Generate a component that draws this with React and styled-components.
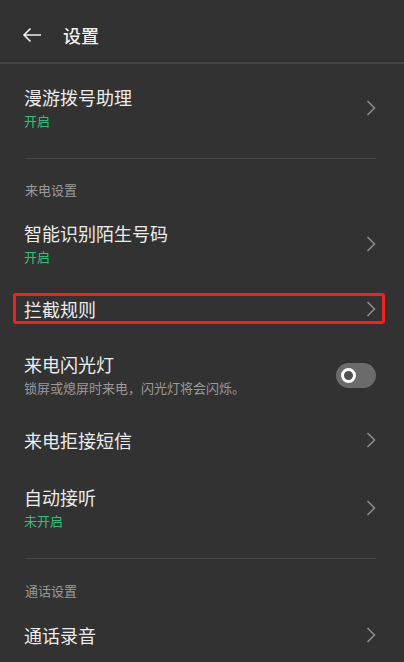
import styled, { createGlobalStyle } from "styled-components";

const GlobalStyle = createGlobalStyle`
    body {
        margin: 0;
        background: #323232;
        font-family: "Noto Sans CJK SC", "Noto Sans", sans-serif;
    }
`;

const Page = styled.div`
    width: 404px;
    min-height: 662px;
    background: #323232;
    color: #ececec;
    overflow: hidden;
`;

const Header = styled.div`
    display: flex;
    align-items: center;
    height: 64px;
    padding: 8px 0 0 22px;
    box-sizing: border-box;
    gap: 21px;
    border-bottom: 2px solid #454545;
    h1 {
        margin: 0;
        font-size: 18px;
        font-weight: 500;
        color: #f0f0f0;
        line-height: 24px;
    }
`;

const Row = styled.div`
    position: relative;
    display: flex;
    align-items: center;
    justify-content: space-between;
    height: ${props => props.h}px;
    padding: 0 28px 0 24px;
    box-sizing: border-box;

    ${props =>
        props.marked &&
        `
        &::after {
            content: "";
            position: absolute;
            left: 13px;
            right: 19px;
            top: 6px;
            bottom: 7px;
            border: 3px solid #f2211c;
            border-radius: 3px;
        }
    `}
`;

const Texts = styled.div`
    display: flex;
    flex-direction: column;
    gap: 2px;
`;

const Title = styled.div`
    font-size: 18px;
    line-height: 24px;
    color: #ececec;
`;

const Sub = styled.div`
    font-size: 13px;
    line-height: 20px;
    color: ${props => (props.green ? "#2ec07a" : "#9a9a9a")};
`;

const Divider = styled.div`
    margin: ${props => props.top}px 28px 0 25px;
    height: 1px;
    background: #474747;
`;

const Section = styled.div`
    padding: ${props => props.top}px 0 0 25px;
    font-size: 13px;
    line-height: 20px;
    color: #9a9a9a;
`;

const Toggle = styled.div`
    width: 40px;
    height: 25px;
    border-radius: 13px;
    background: #6b6b6b;
    display: flex;
    align-items: center;
    padding-left: 5px;
    box-sizing: border-box;
    &::before {
        content: "";
        width: 9px;
        height: 9px;
        border-radius: 50%;
        border: 3px solid #ffffff;
        background: #505050;
    }
`;

const Chevron = () => (
    <svg width="10" height="16" viewBox="0 0 10 16">
        <path d="M1.5 1 L8.5 8 L1.5 15" fill="none" stroke="#8a8a8a" strokeWidth="1.6" />
    </svg>
);

const BackArrow = () => (
    <svg width="20" height="16" viewBox="0 0 20 16">
        <path
            d="M19 8 H2 M8.5 1.5 L2 8 L8.5 14.5"
            fill="none"
            stroke="#f0f0f0"
            strokeWidth="1.6"
        />
    </svg>
);

export default function App() {
    return (
        <Page>
            <GlobalStyle />
            <Header>
                <BackArrow />
                <h1>设置</h1>
            </Header>

            <Row h={88}>
                <Texts>
                    <Title>漫游拨号助理</Title>
                    <Sub green>开启</Sub>
                </Texts>
                <Chevron />
            </Row>
            <Divider top={6} />
            <Section top={21}>来电设置</Section>

            <Row h={87}>
                <Texts>
                    <Title>智能识别陌生号码</Title>
                    <Sub green>开启</Sub>
                </Texts>
                <Chevron />
            </Row>
            <Row h={44} marked>
                <Title>拦截规则</Title>
                <Chevron />
            </Row>
            <Row h={88}>
                <Texts>
                    <Title>来电闪光灯</Title>
                    <Sub>锁屏或熄屏时来电，闪光灯将会闪烁。</Sub>
                </Texts>
                <Toggle />
            </Row>
            <Row h={42}>
                <Title>来电拒接短信</Title>
                <Chevron />
            </Row>
            <Row h={94}>
                <Texts>
                    <Title>自动接听</Title>
                    <Sub green>未开启</Sub>
                </Texts>
                <Chevron />
            </Row>
            <Divider top={3} />
            <Section top={22}>通话设置</Section>

            <Row h={68}>
                <Title>通话录音</Title>
                <Chevron />
            </Row>
        </Page>
    );
}
